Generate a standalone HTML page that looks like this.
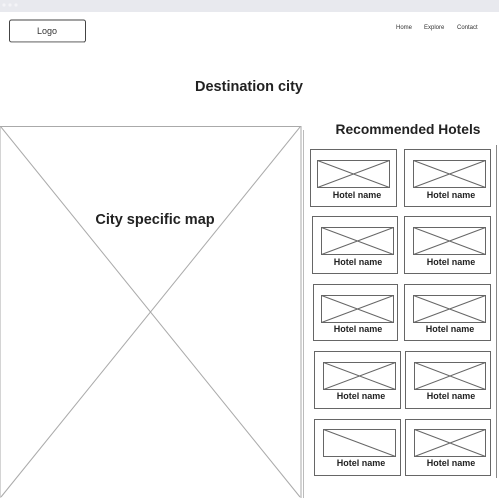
<!DOCTYPE html>
<html><head><style>
body{margin:0;width:499px;height:498px;overflow:hidden;background:#fff;font-family:"Liberation Sans",sans-serif}
svg{display:block}
</style></head><body>
<svg width="499" height="498" viewBox="0 0 499 498" xmlns="http://www.w3.org/2000/svg" font-family="Liberation Sans, sans-serif">
<rect x="0" y="0" width="499" height="12" fill="#e8e9ee"/>
<circle cx="4" cy="5" r="1.6" fill="#f4f4f7"/><circle cx="10" cy="5" r="1.6" fill="#f4f4f7"/><circle cx="16" cy="5" r="1.6" fill="#f4f4f7"/>
<rect x="9.5" y="20" width="76" height="22" rx="2" fill="#fff" stroke="#444" stroke-width="1"/>
<line x1="11" y1="42.5" x2="85" y2="42.5" stroke="#bbb"/>
<text x="47" y="34" font-size="9" text-anchor="middle" fill="#333">Logo</text>
<text x="396" y="29" font-size="6" fill="#333">Home</text>
<text x="424" y="29" font-size="6" fill="#333">Explore</text>
<text x="457" y="29" font-size="6" fill="#333">Contact</text>
<text x="249" y="91" font-size="14.5" font-weight="bold" text-anchor="middle" fill="#222">Destination city</text>
<rect x="0" y="126.5" width="301" height="380" fill="none" stroke="#aaa"/>
<line x1="1" y1="127" x2="300" y2="497" stroke="#aaa"/>
<line x1="300" y1="127" x2="1" y2="497" stroke="#aaa"/>
<rect x="96" y="208" width="118" height="18" fill="#fff"/>
<text x="155" y="224" font-size="14.5" font-weight="bold" text-anchor="middle" fill="#222">City specific map</text>
<line x1="303.5" y1="130" x2="303.5" y2="498" stroke="#bbb"/>
<line x1="496.5" y1="145" x2="496.5" y2="478" stroke="#888"/>
<text x="408" y="134" font-size="13.8" font-weight="bold" text-anchor="middle" fill="#222">Recommended Hotels</text>
<g fill="none" stroke="#666" stroke-width="1">
<rect x="310.5" y="149.5" width="86" height="57"/><rect x="404.5" y="149.5" width="86" height="57"/>
<rect x="317.5" y="160.5" width="72" height="27"/><path d="M317.5 160.5L389.5 187.5M389.5 160.5L317.5 187.5"/>
<rect x="413.5" y="160.5" width="72" height="27"/><path d="M413.5 160.5L485.5 187.5M485.5 160.5L413.5 187.5"/>
<rect x="312.5" y="216.5" width="85" height="57"/><rect x="404.5" y="216.5" width="86" height="57"/>
<rect x="321.5" y="227.5" width="72" height="27"/><path d="M321.5 227.5L393.5 254.5M393.5 227.5L321.5 254.5"/>
<rect x="413.5" y="227.5" width="72" height="27"/><path d="M413.5 227.5L485.5 254.5M485.5 227.5L413.5 254.5"/>
<rect x="313.5" y="284.5" width="84" height="56"/><rect x="404.5" y="284.5" width="86" height="56"/>
<rect x="321.5" y="295.5" width="72" height="27"/><path d="M321.5 295.5L393.5 322.5M393.5 295.5L321.5 322.5"/>
<rect x="413.5" y="295.5" width="72" height="27"/><path d="M413.5 295.5L485.5 322.5M485.5 295.5L413.5 322.5"/>
<rect x="314.5" y="351.5" width="86" height="57"/><rect x="405.5" y="351.5" width="85" height="57"/>
<rect x="323.5" y="362.5" width="72" height="27"/><path d="M323.5 362.5L395.5 389.5M395.5 362.5L323.5 389.5"/>
<rect x="414.5" y="362.5" width="71" height="27"/><path d="M414.5 362.5L485.5 389.5M485.5 362.5L414.5 389.5"/>
<rect x="314.5" y="419.5" width="86" height="56"/><rect x="405.5" y="419.5" width="85" height="56"/>
<rect x="323.5" y="429.5" width="72" height="27"/><path d="M323.5 429.5L395.5 456.5"/>
<rect x="414.5" y="429.5" width="71" height="27"/><path d="M414.5 429.5L485.5 456.5M485.5 429.5L414.5 456.5"/>
</g>
<g font-size="9" font-weight="bold" text-anchor="middle" fill="#222">
<text x="357" y="198">Hotel name</text><text x="451" y="198">Hotel name</text>
<text x="358" y="265">Hotel name</text><text x="451" y="265">Hotel name</text>
<text x="358" y="332">Hotel name</text><text x="450" y="332">Hotel name</text>
<text x="361" y="399">Hotel name</text><text x="451" y="399">Hotel name</text>
<text x="361" y="466">Hotel name</text><text x="451" y="466">Hotel name</text>
</g>
</svg>
</body></html>
